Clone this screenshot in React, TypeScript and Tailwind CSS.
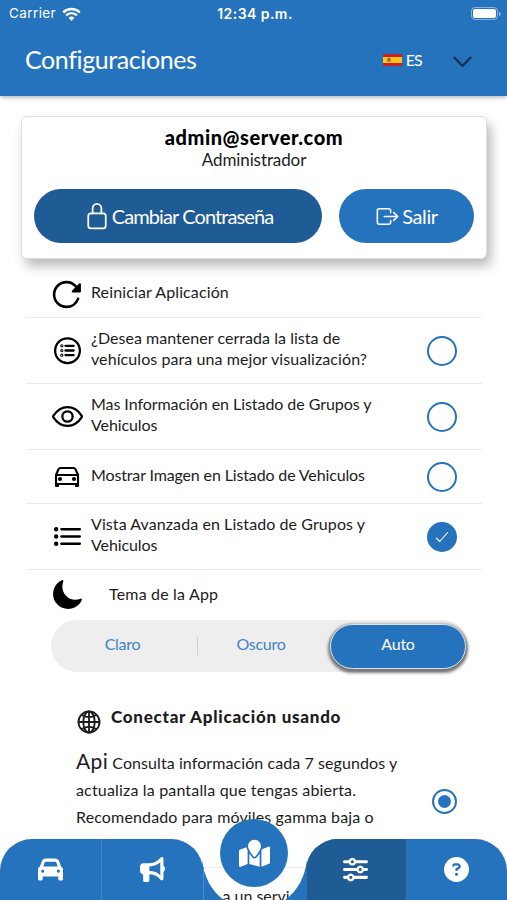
import React, { useState } from 'react';
import clsx from 'clsx';
import {
  IoCarOutline,
  IoCheckmarkOutline,
  IoExitOutline,
  IoEyeOutline,
  IoGlobeOutline,
  IoListCircleOutline,
  IoListOutline,
  IoLockClosedOutline,
  IoMoon,
  IoReload
} from 'react-icons/io5';
import { FaBullhorn, FaCar, FaCircleQuestion, FaMapLocation, FaSliders } from 'react-icons/fa6';

interface SettingRow {
  id: string;
  icon: React.ReactNode;
  lines: { text: string; tracking: string }[];
  height: string;
  toggle: boolean;
}

const rows: SettingRow[] = [
  {
    id: 'restart',
    icon: <IoReload className="w-[33px] h-[33px] [&_path:first-child]:[stroke-width:40px]" />,
    lines: [{ text: 'Reiniciar Aplicación', tracking: 'tracking-[0.12px]' }],
    height: 'h-[47px]',
    toggle: false
  },
  {
    id: 'closed',
    icon: <IoListCircleOutline className="w-[33px] h-[33px] [&_*]:[stroke-width:35px]" />,
    lines: [
      { text: '¿Desea mantener cerrada la lista de', tracking: 'tracking-[0.04px]' },
      { text: 'vehículos para una mejor visualización?', tracking: 'tracking-[0.08px]' }
    ],
    height: 'h-[66px]',
    toggle: true
  },
  {
    id: 'moreInfo',
    icon: <IoEyeOutline className="w-[33px] h-[33px] [&_*]:[stroke-width:35px]" />,
    lines: [
      { text: 'Mas Información en Listado de Grupos y', tracking: 'tracking-[-0.06px]' },
      { text: 'Vehiculos', tracking: 'tracking-[-0.1px]' }
    ],
    height: 'h-[66px]',
    toggle: true
  },
  {
    id: 'image',
    icon: <IoCarOutline className="w-[32px] h-[32px] [&_*]:[stroke-width:34px]" />,
    lines: [{ text: 'Mostrar Imagen en Listado de Vehiculos', tracking: 'tracking-[-0.14px]' }],
    height: 'h-[54px]',
    toggle: true
  },
  {
    id: 'advanced',
    icon: <IoListOutline className="w-[33px] h-[33px] [&_*]:[stroke-width:36px]" />,
    lines: [
      { text: 'Vista Avanzada en Listado de Grupos y', tracking: 'tracking-[0.08px]' },
      { text: 'Vehiculos', tracking: 'tracking-[-0.1px]' }
    ],
    height: 'h-[66px]',
    toggle: true
  }
];

const themes = ['Claro', 'Oscuro', 'Auto'];

const StatusBar = () => (
  <div className="h-[27px] flex items-center justify-between pl-[9px] pr-[6px] font-['Inter',sans-serif] text-white">
    <div className="w-[100px] flex items-center gap-[6px] text-[13.5px] tracking-[0.4px]">
      Carrier
      <svg viewBox="0 0 19 14" className="w-[19px] h-[14px]" fill="none" stroke="currentColor" strokeWidth="2.3">
        <path d="M1.2 5.4a11.8 11.8 0 0 1 16.6 0" />
        <path d="M4.1 8.4a7.6 7.6 0 0 1 10.8 0" />
        <path d="M9.5 13.8 6.6 10.9a4.1 4.1 0 0 1 5.8 0z" fill="currentColor" stroke="none" />
      </svg>
    </div>
    <div className="text-[14px] font-semibold tracking-[0.45px]">12:34 p.m.</div>
    <div className="w-[100px] flex items-center justify-end gap-px">
      <div className="w-[27px] h-[13px] rounded-[4px] border border-white/45 p-[1px]">
        <div className="h-full rounded-[2px] bg-white" />
      </div>
      <div className="w-[1.5px] h-[4px] rounded-r bg-white/45" />
    </div>
  </div>
);

const SpainFlag = () => (
  <svg viewBox="0 0 19 12" className="w-[19px] h-[12px]">
    <rect width="19" height="12" rx="0.8" fill="#c8202a" />
    <rect y="3" width="19" height="6" fill="#fbc417" />
    <rect x="4.2" y="4.6" width="3.6" height="3.2" rx="0.8" fill="#b8642b" />
    <rect x="5.2" y="3.7" width="1.6" height="1.4" fill="#a3472a" />
  </svg>
);

const Toggle = ({ checked, onClick }: { checked: boolean; onClick: () => void }) => (
  <button
    onClick={onClick}
    className={clsx(
      'w-[30px] h-[30px] rounded-full border-[2.5px] border-[#2673bd] flex items-center justify-center',
      checked ? 'bg-[#2673bd]' : 'bg-white'
    )}
  >
    {checked && <IoCheckmarkOutline className="w-[18px] h-[18px] text-white" />}
  </button>
);

const TabBar = () => (
  <div className="absolute inset-x-0 bottom-0 h-[61px] flex justify-between text-white">
    <div className="relative w-[203px] flex">
      <div className="flex-1 flex rounded-t-[32px] bg-[#2673bd] overflow-hidden">
        <button className="w-[102px] flex items-center justify-center border-r border-[#3f86c9]">
          <FaCar className="w-[25px] h-[25px]" />
        </button>
        <button className="flex-1 flex items-center justify-center">
          <FaBullhorn className="w-[25px] h-[25px]" />
        </button>
      </div>
      <svg viewBox="0 0 22 40" className="absolute left-[202px] bottom-0 w-[22px] h-[40px]">
        <path d="M0 0 C2 16 9 31 22 40 H0Z" fill="#2673bd" />
        <path d="M1.5 7V40" stroke="#4a8fce" strokeWidth="1" />
      </svg>
    </div>
    <button className="absolute left-[220px] -top-[20px] w-[68px] h-[68px] rounded-full bg-[#2673bd] flex items-center justify-center">
      <FaMapLocation className="w-[31px] h-[31px]" />
    </button>
    <div className="relative w-[201px] flex">
      <div className="flex-1 flex rounded-t-[32px] bg-[#2673bd] overflow-hidden">
        <button className="w-[100px] flex items-center justify-center bg-[#1f5b94] pr-[2px]">
          <FaSliders className="w-[25px] h-[25px]" />
        </button>
        <button className="flex-1 flex items-center justify-center border-l border-[#3672ab] pr-[2px]">
          <FaCircleQuestion className="w-[25px] h-[25px]" />
        </button>
      </div>
      <svg viewBox="0 0 22 40" className="absolute right-[200px] bottom-0 w-[22px] h-[40px]">
        <path d="M22 0 C20 16 13 31 0 40 H22Z" fill="#2673bd" />
      </svg>
    </div>
  </div>
);

export default function App() {
  const [enabled, setEnabled] = useState<string[]>(['advanced']);
  const [theme, setTheme] = useState('Auto');

  const toggleRow = (id: string) => {
    setEnabled(prev => (prev.includes(id) ? prev.filter(r => r !== id) : [...prev, id]));
  };

  return (
    <div className="relative w-[507px] h-[900px] overflow-hidden bg-white font-['Lato',sans-serif] text-[#1c1c1c] whitespace-nowrap">
      {/* Header */}
      <div className="h-[96px] bg-[#2673bd] shadow-[0_1px_5px_rgba(0,0,0,0.35)]">
        <StatusBar />
        <div className="h-[66px] flex items-center pl-[25px] pr-[35px] text-white">
          <h1 className="flex-1 text-[25px] tracking-[-0.4px]">Configuraciones</h1>
          <SpainFlag />
          <span className="ml-[4px] text-[16px] tracking-[-0.8px]">ES</span>
          <svg viewBox="0 0 19 12" className="ml-[31px] mt-[3px] w-[19px] h-[12px]" fill="none" stroke="#0f3152" strokeWidth="2.2" strokeLinecap="round" strokeLinejoin="round">
            <path d="M1.4 1.6 9.5 10 17.6 1.6" />
          </svg>
        </div>
      </div>

      {/* Account */}
      <div className="ml-[21px] mr-[20px] mt-[20px] h-[143px] rounded-[6px] border border-[#dedede] bg-white pt-[8px] shadow-[4px_7px_12px_rgba(0,0,0,0.28)]">
        <div className="text-center text-[20px] leading-[24px] font-black text-black tracking-[0.55px]">admin@server.com</div>
        <div className="text-center text-[17px] leading-[21px] tracking-[-0.1px]">Administrador</div>
        <div className="flex gap-[17px] px-[12px] mt-[19px] text-[20px] text-white">
          <button className="w-[288px] h-[54px] rounded-full bg-[#1f5b94] flex items-center justify-center gap-[1px]">
            <IoLockClosedOutline className="w-[28px] h-[28px]" />
            <span className="tracking-[-0.9px]">Cambiar Contraseña</span>
          </button>
          <button className="w-[135px] h-[54px] rounded-full bg-[#2673bd] flex items-center justify-center gap-[2px]">
            <IoExitOutline className="w-[25px] h-[25px]" />
            <span className="tracking-[-0.4px]">Salir</span>
          </button>
        </div>
      </div>

      {/* Settings */}
      <div className="mt-[12px] ml-[26px] w-[456px]">
        {rows.map(row => (
          <div key={row.id} className={clsx('flex items-center border-b border-[#ececec]', row.height)}>
            <div className="w-[65px] pl-[17px] flex justify-center text-black">
              <div className="w-[48px] flex justify-center">{row.icon}</div>
            </div>
            <div className="flex-1 pb-[5px] text-[16px] leading-[21px]">
              {row.lines.map(line => (
                <div key={line.text}>
                  <span className={line.tracking}>{line.text}</span>
                </div>
              ))}
            </div>
            {row.toggle && (
              <div className="mr-[25px]">
                <Toggle checked={enabled.includes(row.id)} onClick={() => toggleRow(row.id)} />
              </div>
            )}
          </div>
        ))}
        <div className="h-[50px] flex items-center pb-[2px]">
          <IoMoon className="ml-[25px] w-[33px] h-[33px] text-black" />
          <span className="ml-[25px] text-[16px] tracking-[0.18px]">Tema de la App</span>
        </div>
      </div>

      {/* Theme selector */}
      <div className="ml-[51px] w-[417px] h-[52px] rounded-full bg-[#eeeeee] flex items-center">
        {themes.map((name, i) => (
          <button
            key={name}
            onClick={() => setTheme(name)}
            className={clsx(
              'flex items-center justify-center text-[16px] tracking-[-0.25px]',
              i === 0 && 'w-[147px] pr-[3px]',
              i === 1 && 'w-[132px] pr-[6px]',
              i === 2 && 'w-[136px]',
              theme === name
                ? 'h-[45px] rounded-full bg-[#2673bd] text-white border border-[#d8e4ef] shadow-[0_2px_3px_2px_rgba(0,0,0,0.5)]'
                : 'h-[18px] text-[#3f82c6]',
              i === 0 && 'border-r border-[#cfcfcf]'
            )}
          >
            <span className="-mt-[4px]">{name}</span>
          </button>
        ))}
      </div>

      {/* Connection mode */}
      <div className="mt-[30px] ml-[76px] h-[32px] flex items-center">
        <IoGlobeOutline className="mt-[7px] w-[26px] h-[26px] [&_*]:[stroke-width:36px]" />
        <span className="-mt-[3px] ml-[9px] text-[17px] font-black tracking-[0.74px]">Conectar Aplicación usando</span>
      </div>
      <div className="mt-[13px] ml-[76px] flex">
        <div className="w-[356px] text-[16px] leading-[27px] h-[113px]">
          <div>
            <span className="text-[21px] tracking-[0.4px]">Api</span>{' '}
            <span className="tracking-[0.08px]">Consulta información cada 7 segundos y</span>
          </div>
          <div className="tracking-[0.17px]">actualiza la pantalla que tengas abierta.</div>
          <div className="tracking-[0.14px]">Recomendado para móviles gamma baja o</div>
          <div>multi</div>
        </div>
        <div className="mt-[42px] w-[25px] h-[25px] rounded-full border-[2px] border-[#2673bd] flex items-center justify-center">
          <div className="w-[13px] h-[13px] rounded-full bg-[#2673bd]" />
        </div>
      </div>
      <div className="ml-[76px] mt-[7px] w-[406px] border-t border-[#ececec] pt-[12px] text-[16px] leading-[27px]">
        <span className="text-[21px]">Socket</span> Conectado a un servidor
      </div>

      <TabBar />
    </div>
  );
}
